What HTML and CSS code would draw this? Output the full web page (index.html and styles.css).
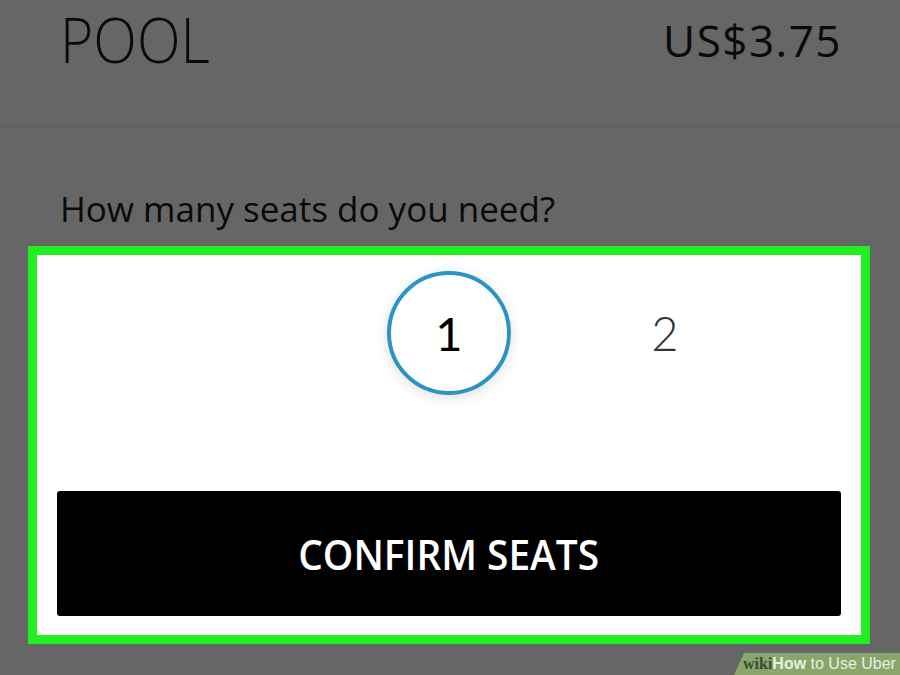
FILE: index.html
```html
<!DOCTYPE html>
<html lang="en">
<head>
<meta charset="utf-8">
<title>POOL – Confirm seats</title>
<link rel="stylesheet" href="styles.css">
</head>
<body>
<div class="screen">
  <header class="header">
    <span class="product">POOL</span>
    <span class="price">US$3.75</span>
  </header>
  <p class="question">How many seats do you need?</p>
  <section class="panel">
    <div class="seats">
      <span class="seat seat-empty"></span>
      <span class="seat seat-selected">1</span>
      <span class="seat">2</span>
    </div>
    <button class="confirm" type="button"><span class="confirm-label">CONFIRM SEATS</span></button>
  </section>
</div>
<div class="watermark"><span class="wm-wiki">wiki</span><span class="wm-how">How</span> to Use Uber</div>
</body>
</html>
```
FILE: styles.css
```css
html, body {
  margin: 0;
  padding: 0;
}
body {
  width: 900px;
  height: 675px;
  background: #666666;
  overflow: hidden;
  position: relative;
  font-family: "Open Sans", "DejaVu Sans", sans-serif;
  color: #000;
}
.screen {
  display: flex;
  flex-direction: column;
}
.header {
  display: flex;
  justify-content: space-between;
  align-items: flex-start;
  height: 127px;
  box-sizing: border-box;
  padding: 1px 58px 0 60px;
  border-bottom: 1px solid #5d5d5d;
}
.product {
  display: inline-block;
  font-size: 63px;
  font-weight: 300;
  line-height: 1.2;
  color: #0a0a0a;
  transform: scaleX(0.905);
  transform-origin: left center;
}
.price {
  margin-top: 13px;
  font-size: 44px;
  font-weight: 400;
  line-height: 1.2;
  letter-spacing: 1.5px;
  color: #0a0a0a;
}
.question {
  margin: 64px 0 0 60px;
  font-size: 35px;
  line-height: 1;
  font-weight: 400;
  color: #0a0a0a;
}
.panel {
  margin: 20px 0 0 28px;
  width: 842px;
  height: 398px;
  box-sizing: border-box;
  border: 9px solid #22ef22;
  background: #ffffff;
  display: flex;
  flex-direction: column;
}
.seats {
  display: grid;
  grid-template-columns: repeat(3, 216px);
  justify-content: center;
  justify-items: center;
  padding-top: 16px;
}
.seat {
  width: 124px;
  height: 124px;
  box-sizing: border-box;
  border-radius: 50%;
  display: flex;
  align-items: center;
  justify-content: center;
  font-family: Lato, "Open Sans", sans-serif;
  font-size: 47px;
  line-height: 1;
  font-weight: 300;
  color: #333;
}
.seat-selected {
  border: 4px solid #2b93c6;
  color: #000;
  font-weight: 400;
  box-shadow: 0 3px 14px rgba(0, 0, 0, 0.12);
}
.confirm {
  margin: auto 20px 19px 20px;
  height: 125px;
  border: none;
  border-radius: 3px;
  background: #000;
  color: #fff;
  font-family: "Open Sans", "DejaVu Sans", sans-serif;
  font-size: 42px;
  font-weight: 600;
  line-height: 1;
  padding: 0;
}
.confirm-label {
  display: inline-block;
  transform: scaleX(0.925);
}
.watermark {
  position: absolute;
  right: 0;
  bottom: 0;
  width: 166px;
  height: 22px;
  background: #89a56b;
  clip-path: polygon(10px 0, 100% 0, 100% 100%, 0 100%);
  font-family: "Liberation Sans", Arial, sans-serif;
  font-size: 16px;
  line-height: 22px;
  color: #e8eee0;
  padding-left: 9px;
  box-sizing: border-box;
  white-space: nowrap;
}
.wm-wiki {
  font-family: "Liberation Serif", serif;
  font-weight: 700;
  color: #3b4a33;
}
.wm-how {
  font-weight: 700;
}
```
